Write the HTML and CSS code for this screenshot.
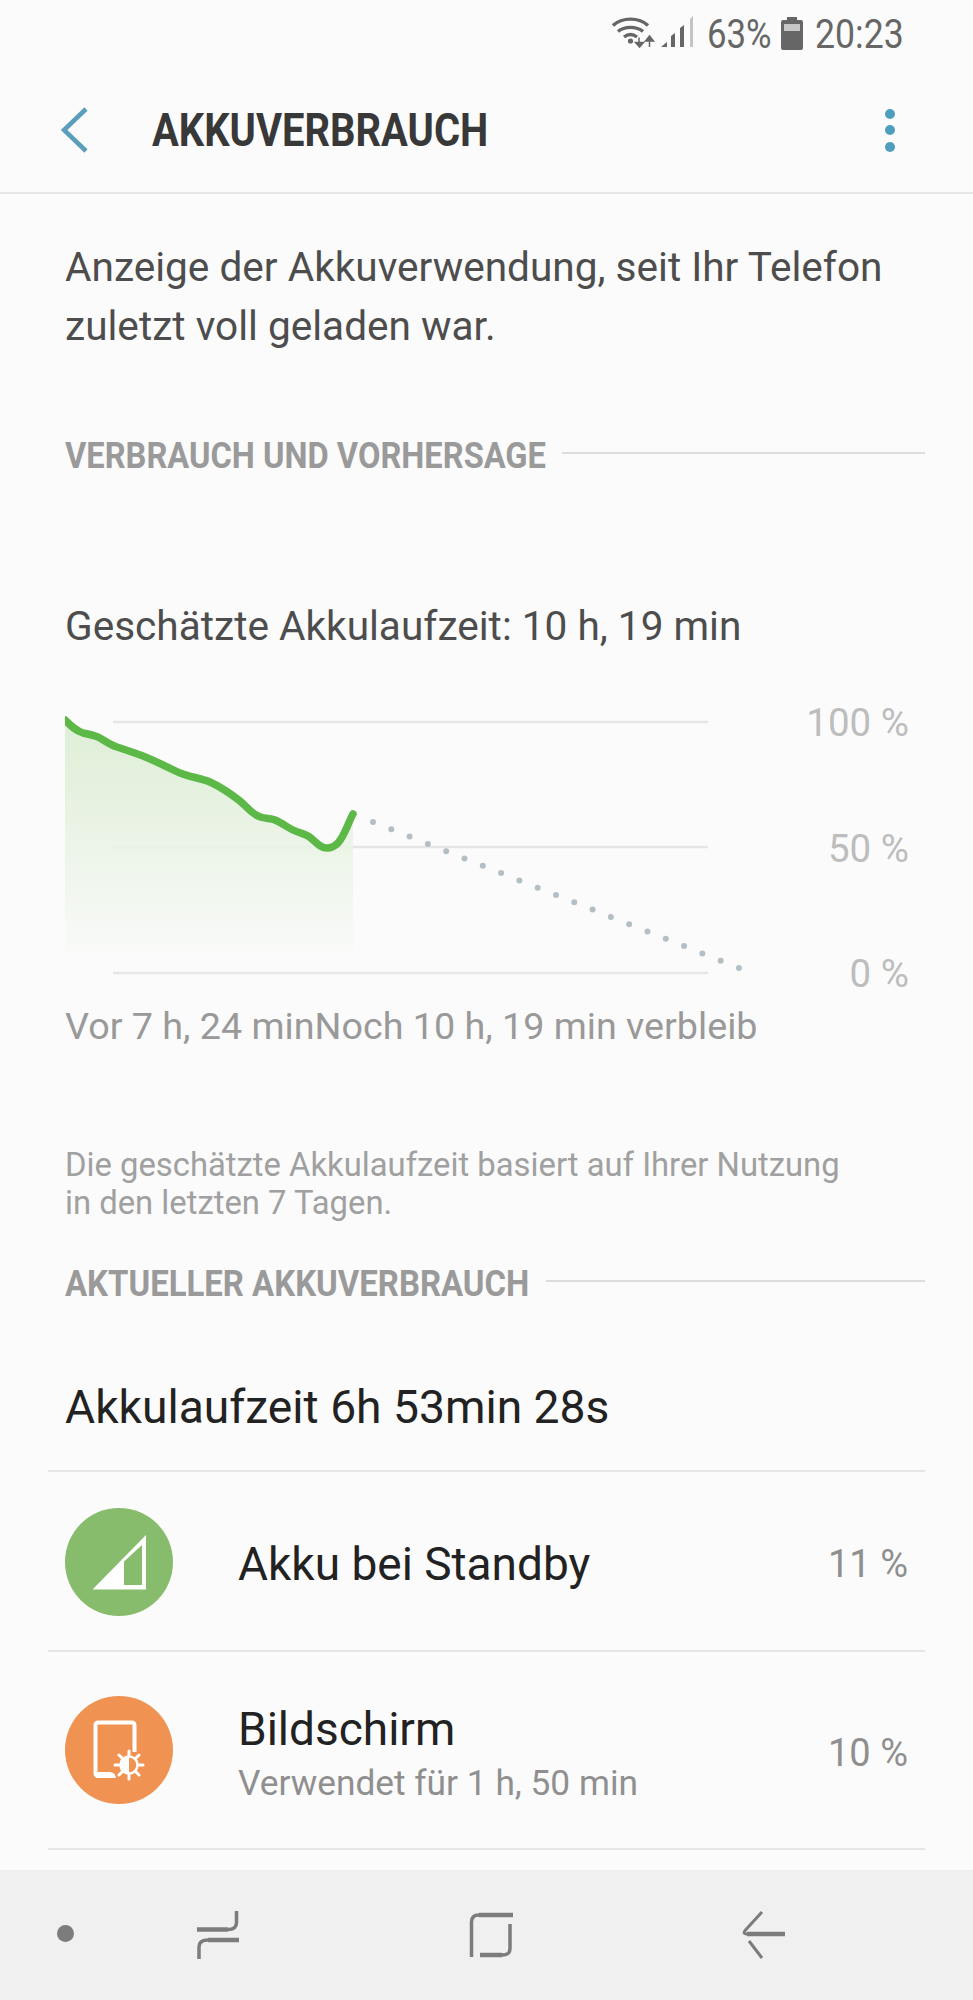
FILE: index.html
```html
<!DOCTYPE html>
<html lang="de">
<head>
<meta charset="utf-8">
<title>Akkuverbrauch</title>
<link rel="stylesheet" href="styles.css">
</head>
<body>
<div class="page">
  <div class="status">
    <svg class="st-wifi" width="44" height="34" viewBox="0 0 44 34">
      <g fill="none" stroke="#666" stroke-width="3.4">
        <path d="M1 9.5C10 1 27 1 36 9.5"/>
        <path d="M6 15.5C12.500 10 24.500 10 31 15.500"/>
        <path d="M12 21C16 18 21 18 25 21"/>
      </g>
      <circle cx="18.500" cy="25" r="2.600" fill="#666"/>
      <path d="M27 21.500v8M27.500 31l-4-4.500h8zM37.500 31v-8M37.500 20l-4 5h8z" fill="#666" stroke="#666" stroke-width="1.500"/>
    </svg>
    <svg class="st-signal" width="32" height="32" viewBox="0 0 32 32">
      <path d="M0 31l6-5v5zM10 31V20l4-3v14zM19 31V12l4-3v22z" fill="#666"/>
      <path d="M29 31V3l3-3v31z" fill="#c4c4c4"/>
    </svg>
    <span class="st-text st-pct">63%</span>
    <svg class="st-batt" width="22" height="33" viewBox="0 0 22 33">
      <path d="M6 0h10v3h4a2 2 0 0 1 2 2v26a2 2 0 0 1-2 2H2a2 2 0 0 1-2-2V5a2 2 0 0 1 2-2h4z" fill="#666"/>
      <rect x="3" y="7" width="16" height="7" fill="#c6c6c6"/>
    </svg>
    <span class="st-text st-time">20:23</span>
  </div>

  <header class="appbar">
    <svg class="back" width="28" height="46" viewBox="0 0 28 46">
      <path d="M25 2L3 23l22 21" fill="none" stroke="#5b9ebb" stroke-width="4.500"/>
    </svg>
    <h1 class="title">AKKUVERBRAUCH</h1>
    <div class="more"><i></i><i></i><i></i></div>
  </header>

  <main class="content">
    <p class="intro">Anzeige der Akkuverwendung, seit Ihr Telefon<br>zuletzt voll geladen war.</p>

    <div class="section first"><span>VERBRAUCH UND VORHERSAGE</span><b></b></div>

    <p class="estimate">Geschätzte Akkulaufzeit: 10 h, 19 min</p>

    <div class="chart">
      <svg class="graph" width="680" height="295" viewBox="65 700 680 295">
        <defs>
          <linearGradient id="fade" x1="0" y1="0" x2="0" y2="1">
            <stop offset="0" stop-color="#d9ecd0"/>
            <stop offset="0.5" stop-color="#e9f3e4"/>
            <stop offset="1" stop-color="#fbfbfb"/>
          </linearGradient>
        </defs>
        <g stroke="#e6e6e6" stroke-width="2.500">
          <path d="M113 721H708M113 846H708M113 972H708"/>
        </g>
        <path fill="url(#fade)" fill-opacity="0.85" d="M65 719C71 725 76 730 83 732C88 733 93 734 98 736C104 739 110 744 117 746C126 749 135 752 143 755C156 760 168 767 180 772C190 776 200 777 210 781C221 786 231 793 240 800C246 805 251 812 258 815C264 818 270 817 275 819C282 822 287 826 293 829C299 832 303 832 308 835C315 839 319 847 327 847C331 847 335 845 338 842C345 834 348 822 353 813V966H65Z"/>
        <path fill="none" stroke="#5db947" stroke-width="7.500" stroke-linecap="round" stroke-linejoin="round" d="M65 719C71 725 76 730 83 732C88 733 93 734 98 736C104 739 110 744 117 746C126 749 135 752 143 755C156 760 168 767 180 772C190 776 200 777 210 781C221 786 231 793 240 800C246 805 251 812 258 815C264 818 270 817 275 819C282 822 287 826 293 829C299 832 303 832 308 835C315 839 319 847 327 847C331 847 335 845 338 842C345 834 348 822 353 813"/>
        <path fill="none" stroke="#b4bfc5" stroke-width="6" stroke-linecap="round" stroke-dasharray="0 19.700" d="M373 821L739 967"/>
      </svg>
      <div class="scale"><span>100 %</span><span>50 %</span><span>0 %</span></div>
    </div>

    <p class="caption">Vor 7 h, 24 minNoch 10 h, 19 min verbleib</p>

    <p class="note">Die geschätzte Akkulaufzeit basiert auf Ihrer Nutzung<br>in den letzten 7 Tagen.</p>

    <div class="section second"><span>AKTUELLER AKKUVERBRAUCH</span><b></b></div>

    <div class="summary">Akkulaufzeit 6h 53min 28s</div>

    <div class="row standby">
      <svg class="ico" width="108" height="108" viewBox="0 0 108 108">
        <circle cx="54" cy="54" r="54" fill="#86bc6b"/>
        <path d="M27.500 81.500L81 27V81.500Z" fill="#fff"/>
        <path d="M59 53.500L77 37V77H59Z" fill="#86bc6b"/>
      </svg>
      <div class="label"><div class="name">Akku bei Standby</div></div>
      <div class="value">11 %</div>
    </div>

    <div class="row screen">
      <svg class="ico" width="108" height="108" viewBox="0 0 108 108">
        <circle cx="54" cy="54" r="54" fill="#f09352"/>
        <path d="M50 80H33a2.500 2.500 0 0 1-2.500-2.500V29a2.500 2.500 0 0 1 2.500-2.500h34a2.500 2.500 0 0 1 2.500 2.500V56" fill="none" stroke="#fff" stroke-width="4"/>
        <path d="M30 76h14c4 0 6 2 7 6H33a3 3 0 0 1-3-3z" fill="#fff"/>
        <g stroke="#fff" stroke-width="3" stroke-linecap="round">
          <path d="M64 55v4M64 79v4M50 69h4M74 69h4M54 59l3 3M71 76l3 3M54 79l3-3M71 62l3-3"/>
        </g>
        <circle cx="64" cy="69" r="8.500" fill="none" stroke="#fff" stroke-width="2.500"/>
        <path d="M64 60.500a8.500 8.500 0 0 0 0 17z" fill="#fff"/>
      </svg>
      <div class="label">
        <div class="name">Bildschirm</div>
        <div class="sub">Verwendet für 1 h, 50 min</div>
      </div>
      <div class="value">10 %</div>
    </div>
  </main>

  <nav class="navbar">
    <i class="nav-dot"></i>
    <svg class="nav-recent" width="44" height="50" viewBox="0 0 44 50">
      <g fill="none" stroke="#7c7c7c">
        <path stroke-width="4.500" d="M1 19.500H32"/>
        <path stroke-width="3.500" d="M32 19.500C37 19.500 40.500 18 40.500 12.500V1"/>
        <path stroke-width="4.500" d="M43 30H12"/>
        <path stroke-width="3.500" d="M12 30C6 30 3 32 3 37V49"/>
      </g>
    </svg>
    <svg class="nav-home" width="46" height="48" viewBox="0 0 46 48">
      <g fill="none" stroke="#7c7c7c">
        <path stroke-width="4.500" d="M44 4H10"/>
        <path stroke-width="3.500" d="M10 4C5 4 2.500 6 2.500 11V46"/>
        <path stroke-width="4.500" d="M11 44H33"/>
        <path stroke-width="3.500" d="M33 44C38 44 41 43 41 37V13"/>
      </g>
    </svg>
    <svg class="nav-back" width="44" height="50" viewBox="0 0 44 50">
      <g fill="none" stroke="#7c7c7c">
        <path stroke-width="3" d="M20 2L3.500 20C1 23 2 24 5 24"/>
        <path stroke-width="4.500" d="M5 24H43"/>
        <path stroke-width="3" d="M7 31L20 48"/>
      </g>
    </svg>
  </nav>
</div>
</body>
</html>
```

FILE: styles.css
```css
* { box-sizing: border-box; margin: 0; padding: 0; }
html, body { background: #fbfbfb; }
body { font-family: Roboto, "Liberation Sans", sans-serif; }
.page { width: 973px; height: 2000px; display: flex; flex-direction: column; overflow: hidden; }

.status { height: 60px; display: flex; align-items: flex-start; padding: 16px 0 0 612px; color: #666; flex: none; }
.st-signal { margin: 0 0 0 5px; }
.st-text { font-size: 40px; line-height: 38px; transform-origin: 0 50%; transform: scaleX(.87); display: block; }
.st-pct { margin-left: 14px; width: 74px; }
.st-batt { margin-top: 1px; }
.st-time { margin-left: 12px; transform: scaleX(.89); }

.appbar { height: 134px; flex: none; display: flex; align-items: center; border-bottom: 2px solid #e6e6e6; padding: 8px 0 0 61px; }
.back { flex: none; }
.title { font-size: 46px; font-weight: 700; color: #383838; margin-left: 63px; flex: 1; line-height: 50px; transform-origin: 0 50%; transform: scaleX(.868); }
.more { display: flex; flex-direction: column; gap: 6.500px; margin-right: 78px; }
.more i { width: 10px; height: 10px; border-radius: 50%; background: #4f9dbd; display: block; }

.content { flex: 1; padding: 0 48px; overflow: hidden; }
.intro { font-size: 40.600px; line-height: 59px; color: #4d4d4d; margin: 44px 0 0 17px; }

.section { display: flex; align-items: center; gap: 16px; margin-left: 17px; height: 44px; }
.section span { display: block; font-size: 36.500px; font-weight: 700; color: #9a9a9a; transform-origin: 0 50%; white-space: nowrap; }
.section b { flex: 1; height: 2px; background: #dcdcdc; margin-top: -4px; }
.first { margin-top: 77px; }
.first span { transform: scaleX(.894); margin-right: -57px; }
.second { margin-top: 39px; }
.second span { transform: scaleX(.902); margin-right: -50px; }

.estimate { font-size: 40.600px; line-height: 50px; color: #4d4d4d; margin: 124px 0 0 17px; }

.chart { display: flex; margin: 50px 0 0 17px; height: 295px; }
.graph { display: block; flex: none; }
.scale { width: 164px; display: flex; flex-direction: column; justify-content: space-between; align-items: flex-end; font-size: 38.500px; line-height: 44px; color: #bdbdbd; }

.caption { font-size: 37.700px; line-height: 44px; color: #999; margin: 8px 0 0 17px; white-space: nowrap; }
.note { font-size: 32.800px; line-height: 38px; color: #a0a0a0; margin: 98px 0 0 17px; white-space: nowrap; }

.summary { height: 110px; font-size: 46.200px; line-height: 90px; padding-left: 17px; color: #222; border-bottom: 2px solid #e6e6e6; margin-top: 57px; }

.row { display: flex; align-items: center; border-bottom: 2px solid #e6e6e6; padding: 0 17px; }
.standby { height: 180px; }
.screen { height: 198px; }
.ico { flex: none; display: block; }
.standby .ico { margin-top: 2px; }
.label { flex: 1; margin: 6px 0 0 65px; }
.name { font-size: 46px; line-height: 54px; color: #222; }
.sub { font-size: 35.300px; line-height: 44px; color: #8f8f8f; margin-top: 5px; }
.value { font-size: 38px; color: #8f8f8f; margin-top: 5px; }

.navbar { height: 130px; flex: none; background: #f0f0f0; display: flex; align-items: center; }
.nav-dot { width: 17px; height: 17px; border-radius: 50%; background: #7c7c7c; margin: -3px 0 0 57px; display: block; }
.nav-recent { margin-left: 122px; }
.nav-home { margin-left: 229px; }
.nav-back { margin-left: 227px; }
```
